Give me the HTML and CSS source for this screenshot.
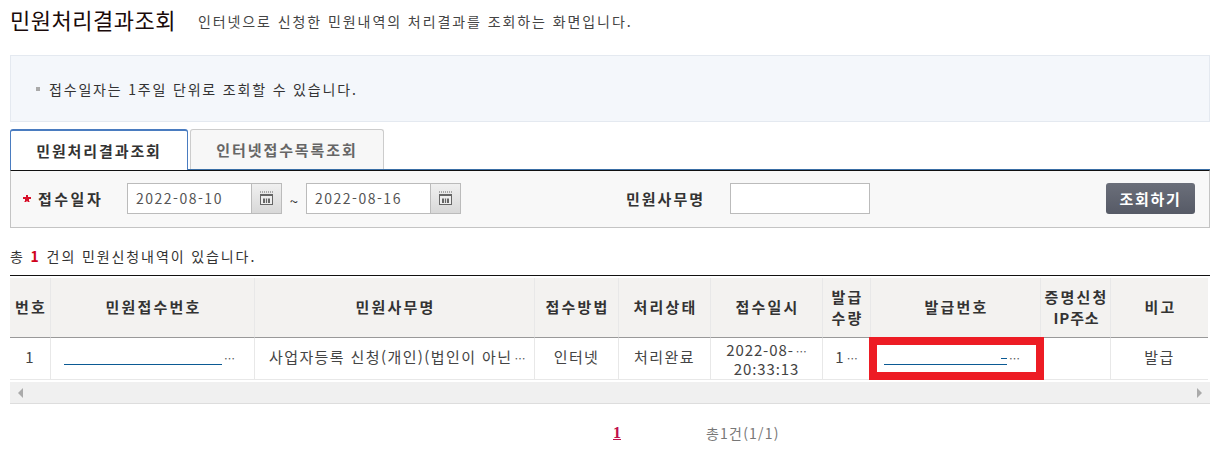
FILE: index.html
```html
<!DOCTYPE html>
<html lang="ko">
<head>
  <meta charset="UTF-8" />
  <title>민원처리결과조회</title>
  <link rel="stylesheet" href="styles.css">
</head>
<body>
  <div class="page">
    <div class="title-row">
      <h1>민원처리결과조회</h1>
      <p>인터넷으로 신청한 민원내역의 처리결과를 조회하는 화면입니다.</p>
    </div>

    <div class="notice">
      <span class="bullet"></span>
      <span>접수일자는 1주일 단위로 조회할 수 있습니다.</span>
    </div>

    <div class="tabs">
      <a class="tab active" href="#">민원처리결과조회</a>
      <a class="tab" href="#">인터넷접수목록조회</a>
    </div>

    <div class="search">
      <svg class="required" width="8" height="7" viewBox="0 0 8 7">
        <path d="M3 0h2v2h3v2H6v2l1 1H5L4 6 3 7H1l1-1V4H0V2h3z" fill="#d8102a" />
      </svg>
      <label class="date-label">접수일자</label>
      <span class="date-group">
        <input class="date-input" type="text" value="2022-08-10">
        <button class="cal-btn" type="button">
          <svg width="15" height="15" viewBox="0 0 15 15">
            <path d="M1 1h1M3 1h1M5 1h1M7 1h1M9 1h1M11 1h1M13 1h1" stroke="#666" />
            <rect x="1.5" y="3.5" width="12" height="10" fill="#eee" stroke="#666" />
            <rect x="1" y="3" width="13" height="2" fill="#666" />
            <path d="M4 7.5h7v4.5H4z" fill="#666" />
            <path d="M6.5 7v5M8.5 7v5" stroke="#ddd" />
          </svg>
        </button>
      </span>
      <span class="tilde">~</span>
      <span class="date-group">
        <input class="date-input" type="text" value="2022-08-16">
        <button class="cal-btn" type="button">
          <svg width="15" height="15" viewBox="0 0 15 15">
            <path d="M1 1h1M3 1h1M5 1h1M7 1h1M9 1h1M11 1h1M13 1h1" stroke="#666" />
            <rect x="1.5" y="3.5" width="12" height="10" fill="#eee" stroke="#666" />
            <rect x="1" y="3" width="13" height="2" fill="#666" />
            <path d="M4 7.5h7v4.5H4z" fill="#666" />
            <path d="M6.5 7v5M8.5 7v5" stroke="#ddd" />
          </svg>
        </button>
      </span>
      <label class="name-label">민원사무명</label>
      <input class="name-input" type="text">
      <button class="search-btn" type="button">조회하기</button>
    </div>

    <p class="count">총 <strong>1</strong> 건의 민원신청내역이 있습니다.</p>

    <div class="grid-wrap">
      <table class="grid">
        <colgroup>
          <col class="c1"><col class="c2"><col class="c3"><col class="c4"><col class="c5">
          <col class="c6"><col class="c7"><col class="c8"><col class="c9"><col class="c10">
        </colgroup>
        <thead>
          <tr>
            <th>번호</th>
            <th>민원접수번호</th>
            <th>민원사무명</th>
            <th>접수방법</th>
            <th>처리상태</th>
            <th>접수일시</th>
            <th>발급<br>수량</th>
            <th>발급번호</th>
            <th>증명신청<br><span class="ip">IP주소</span></th>
            <th>비고</th>
          </tr>
        </thead>
        <tbody>
          <tr>
            <td>1</td>
            <td class="left"><a class="blank-link wide" href="#"></a><span class="more">…</span></td>
            <td class="left clip">사업자등록 신청(개인)(법인이 아닌<span class="more">…</span></td>
            <td>인터넷</td>
            <td>처리완료</td>
            <td class="date">2022-08-<span class="more">…</span><br>20:33:13</td>
            <td>1<span class="more">…</span></td>
            <td class="left"><a class="blank-link narrow" href="#"></a><span class="more">…</span></td>
            <td></td>
            <td>발급</td>
          </tr>
        </tbody>
      </table>
      <div class="highlight"></div>
      <div class="hscroll">
        <span class="arrow arrow-left"></span>
        <span class="arrow arrow-right"></span>
      </div>
    </div>

    <div class="paging">
      <a class="page-num" href="#">1</a>
      <span class="page-total">총1건(1/1)</span>
    </div>
  </div>
</body>
</html>
```

FILE: styles.css
```css
* { margin: 0; padding: 0; box-sizing: border-box; font-family: "Noto Sans CJK KR", "Noto Sans", sans-serif; }
body { background-color: #fff; color: #333; font-size: 14px; }

.page {
  width: 1200px;
  margin-left: 10px;
}

.title-row {
  display: flex;
  align-items: center;
  height: 55px;
  padding-bottom: 18px;
}

.title-row h1 {
  font-size: 22px;
  font-weight: 400;
  color: #1a0a0a;
  letter-spacing: 0.5px;
}

.title-row p {
  margin-left: 22px;
  margin-top: 5px;
  font-size: 14px;
  letter-spacing: 1.92px;
  color: #444;
}

.notice {
  display: flex;
  align-items: center;
  height: 67px;
  padding-left: 25px;
  background-color: #f4f7fb;
  border: 1px solid #e4e9f0;
  letter-spacing: 1.82px;
}

.bullet {
  width: 4px;
  height: 4px;
  margin-right: 9px;
  background-color: #aaa;
}

.tabs {
  display: flex;
  gap: 2px;
  height: 41px;
  margin-top: 7px;
  border-bottom: 1px solid #3a6ea5;
}

.tab {
  display: flex;
  align-items: center;
  justify-content: center;
  width: 194px;
  background-color: #f7f7f7;
  border: 1px solid #ccc;
  border-bottom: none;
  border-radius: 3px 3px 0 0;
  font-size: 15px;
  font-weight: 700;
  letter-spacing: 1.9px;
  color: #666;
  text-decoration: none;
}

.tab.active {
  width: 178px;
  height: 41px;
  background-color: #fff;
  border-color: #4a7cc0;
  border-width: 2px 1px 0;
  color: #333;
}

.search {
  display: flex;
  align-items: center;
  height: 58px;
  padding: 0 14px 2px 12px;
  background-color: #f8f8f8;
  border: 1px solid #c4c4c4;
  border-top: 1px solid #111;
}

.required {
  width: 8px;
  margin-right: 7px;
}

.date-label {
  width: 89px;
  font-size: 15px;
  font-weight: 700;
  letter-spacing: 2.5px;
}

.date-group {
  display: flex;
}

.date-input {
  width: 124px;
  height: 31px;
  padding-left: 8px;
  background-color: #fff;
  border: 1px solid #bbb;
  border-right: none;
  font-size: 14px;
  letter-spacing: 1.5px;
  color: #555;
}

.cal-btn {
  display: flex;
  align-items: center;
  justify-content: center;
  width: 31px;
  height: 31px;
  background: linear-gradient(#f0f0f0, #d8d8d8);
  border: 1px solid #bbb;
}

.tilde {
  width: 24px;
  padding-top: 4px;
  text-align: center;
  font-size: 15px;
  color: #333;
}

.name-label {
  margin-left: 165px;
  font-size: 15px;
  font-weight: 700;
  letter-spacing: 2px;
}

.name-input {
  width: 140px;
  height: 31px;
  margin-left: 25px;
  background-color: #fff;
  border: 1px solid #bbb;
}

.search-btn {
  width: 89px;
  height: 31px;
  margin-left: auto;
  background: linear-gradient(#6b6f7a, #565a66);
  border: none;
  border-radius: 3px;
  color: #fff;
  font-size: 15px;
  font-weight: 700;
  letter-spacing: 1.7px;
}

.count {
  height: 47px;
  padding-top: 18px;
  letter-spacing: 1.9px;
  color: #333;
}

.count strong {
  color: #d0021b;
}

.grid-wrap {
  position: relative;
  border-top: 1px solid #111;
}

.grid {
  width: 1198px;
  margin-top: 2px;
  border-collapse: separate;
  border-spacing: 0;
  table-layout: fixed;
}

.c1 { width: 41px; }
.c2 { width: 204px; }
.c3 { width: 280px; }
.c4 { width: 84px; }
.c5 { width: 92px; }
.c6 { width: 112px; }
.c7 { width: 48px; }
.c8 { width: 170px; }
.c9 { width: 70px; }
.c10 { width: 97px; }

.grid th {
  height: 60px;
  padding: 0 0 2px 2px;
  background-color: #f3f2f0;
  border-right: 1px solid #e8e8e8;
  border-bottom: 1px solid #999;
  font-size: 15px;
  font-weight: 700;
  line-height: 21px;
  letter-spacing: 2.2px;
  color: #333;
}

.grid th .ip { letter-spacing: 0.8px; }

.grid td {
  height: 42px;
  padding: 0 3px 3px;
  border-right: 1px solid #e8e8e8;
  border-bottom: 1px solid #e8e8e8;
  text-align: center;
  font-size: 15px;
  line-height: 20px;
  letter-spacing: 1.4px;
  color: #444;
  white-space: nowrap;
}

.grid th:last-child, .grid td:last-child { border-right: none; }

.grid td.left { padding-left: 13px; text-align: left; }
.grid td.clip { padding-left: 14px; overflow: hidden; letter-spacing: 1.4px; }
.grid td.date { padding-bottom: 0; line-height: 17px; letter-spacing: 0.9px; }

.blank-link {
  display: inline-block;
  height: 15px;
  margin-bottom: 1px;
  border-bottom: 1px solid #0b5a94;
  vertical-align: middle;
}

.blank-link.wide { width: 158px; }

/* the last character of the number is still visible above the line */
.blank-link.narrow {
  width: 123px;
  background: linear-gradient(#0b5a94, #0b5a94) no-repeat right 8px / 6px 1px;
}

.more { margin-left: 2px; font-size: 11px; letter-spacing: 0; color: #555; }

.highlight {
  position: absolute;
  left: 859px;
  top: 61px;
  width: 175px;
  height: 43px;
  border: 8px solid #ed1c24;
}

.hscroll {
  display: flex;
  align-items: center;
  justify-content: space-between;
  height: 22px;
  margin-top: 2px;
  padding: 0 8px;
  background-color: #f0f0f0;
  border-bottom: 1px solid #ddd;
}

.arrow {
  width: 0;
  height: 0;
  border-top: 5px solid transparent;
  border-bottom: 5px solid transparent;
}

.arrow-left { border-right: 5px solid #aaa; }
.arrow-right { border-left: 5px solid #aaa; }

.paging {
  display: flex;
  align-items: center;
  height: 58px;
  padding-left: 603px;
}

.page-num {
  font-family: "Liberation Serif", serif;
  font-size: 16px;
  font-weight: 700;
  color: #c0104a;
}

.page-total {
  margin-left: 85px;
  font-size: 14px;
  letter-spacing: 1.2px;
  color: #777;
}
```
